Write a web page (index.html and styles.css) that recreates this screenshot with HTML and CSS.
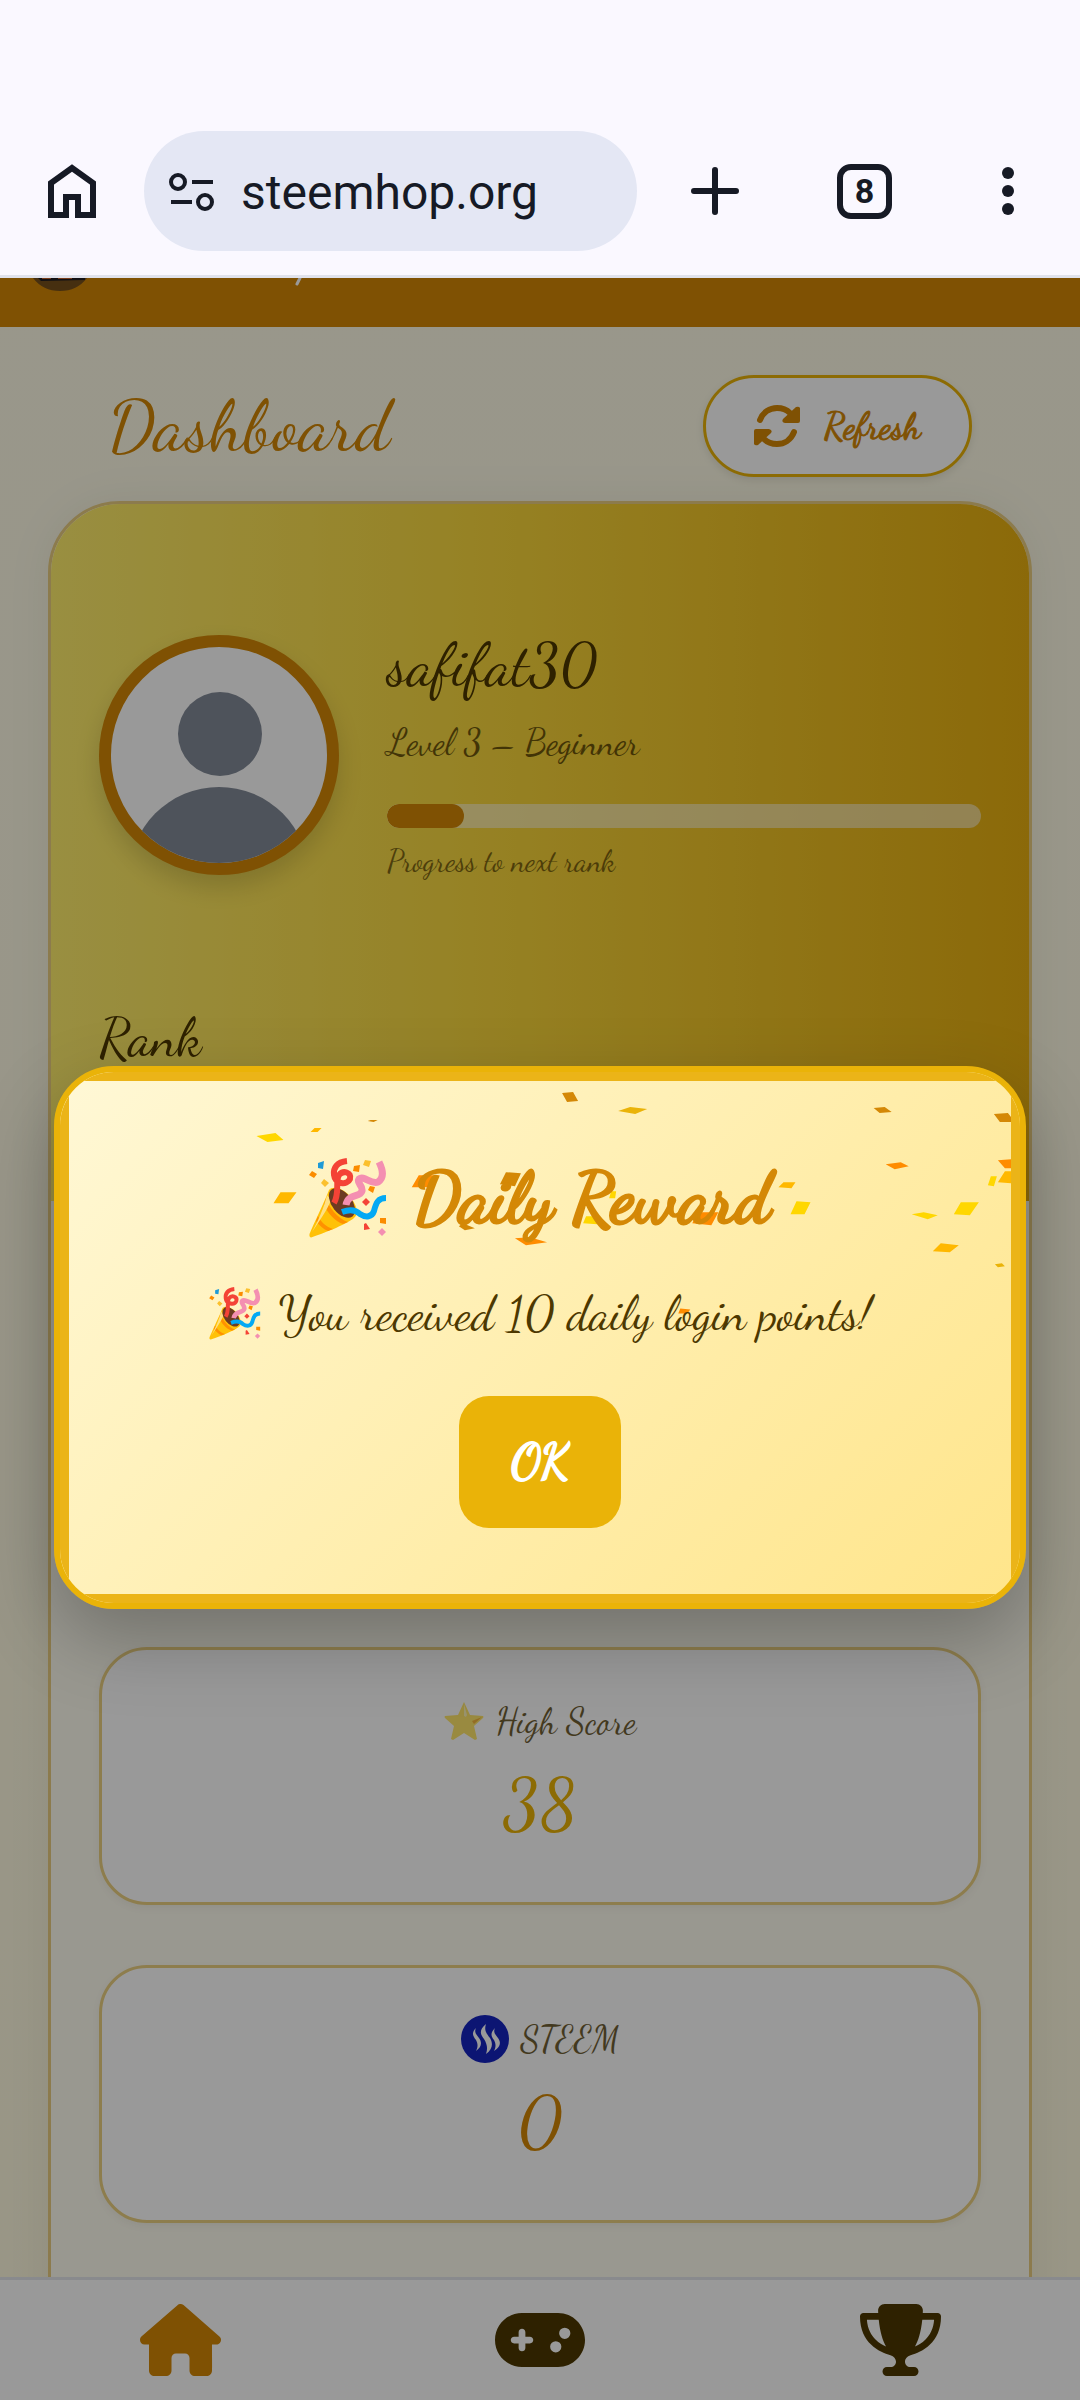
FILE: index.html
```html
<!DOCTYPE html>
<html lang="en">
<head>
  <meta charset="UTF-8">
  <meta name="viewport" content="width=device-width, initial-scale=1.0">
  <title>Dashboard</title>
  <link rel="stylesheet" href="styles.css">
</head>
<body>
  <!-- Shared icons -->
  <svg class="sprite" aria-hidden="true">
    <symbol id="popper" viewBox="0 0 78 80">
      <path d="M20 32C15 45 5 65 .5 76c-.5 3 1 4 3 3C18 74 38 66 45 60c6-5 2-14-5-23-8-8-17-9-20-5z" fill="#ffc107"/>
      <path d="M17 41c3 8 12 20 22 23l-5 2C26 63 18 55 15 46zM9 58c3 6 8 11 15 13l-5 2c-5-2-9-6-12-10z" fill="#ff9100"/>
      <path d="M18 37C15 50 9 63 3 74c6-9 16-23 19-32z" fill="#ffe082"/>
      <ellipse cx="33" cy="45" rx="10" ry="17" transform="rotate(-38 33 45)" fill="#6d3b22"/>
      <g fill="none">
        <path d="M38 3C28 4 24 10 25 17c1 9 13 11 16 4 2-7-7-9-11-4-4 6 1 18-5 28" stroke="#f44336" stroke-width="6"/>
        <path d="M37 47c2-12 14-7 16-14 1-6-6-8-3-12 5-4 12 6 19 3 6-4 5-12 1-20" stroke="#f48fb1" stroke-width="7"/>
        <path d="M33 54c8-3 14-2 18 2 6 4 12 3 14-3 2-8 4-13 12-13" stroke="#03a9f4" stroke-width="6"/>
      </g>
      <path d="M9 5l6-2-1 8-5-1z" fill="#1e9ad6"/>
      <path d="M0 17l3-4 5 3-3 4zM45 8l6-1-1 7-6-1zM61 28l5 1-2 6-5-3zM71 60h6v6l-6-1z" fill="#fb8c00"/>
      <path d="M12 25l3-4 5 4-4 4zM56 2l6 1-2 6-6-2z" fill="#fbc02d"/>
      <path d="M57 40l4 4-4 4-4-4zM57 65l4 6-6 1v-6z" fill="#f44336"/>
      <path d="M73 70l4 4-4 4-4-4z" fill="#f48fb1"/>
    </symbol>
  </svg>

  <header class="browser-bar">
    <button type="button" class="icon-btn" aria-label="Home">
      <svg width="48" height="54" viewBox="0 0 48 54"><path d="M3 51V19L24 4l21 15v32H30V33H18v18z" fill="none" stroke="#161a25" stroke-width="6"/></svg>
    </button>
    <div class="address">
      <svg width="46" height="38" viewBox="0 0 46 38" fill="none" stroke="#161a25" stroke-width="4"><circle cx="9" cy="9" r="7"/><path d="M23 9h21M2 29h21"/><circle cx="36" cy="29" r="7"/></svg>
      <input type="text" class="url" value="steemhop.org" aria-label="Address">
    </div>
    <div class="browser-actions">
      <button type="button" class="icon-btn" aria-label="New tab">
        <svg width="48" height="48" viewBox="0 0 48 48"><path d="M24 3v42M3 24h42" stroke="#161a25" stroke-width="6" stroke-linecap="round"/></svg>
      </button>
      <button type="button" class="icon-btn tabs">8</button>
      <button type="button" class="icon-btn" aria-label="Menu">
        <svg width="36" height="48" viewBox="0 0 36 48" fill="#161a25"><circle cx="18" cy="6" r="6"/><circle cx="18" cy="24" r="6"/><circle cx="18" cy="42" r="6"/></svg>
      </button>
    </div>
  </header>

  <div class="page">
    <div class="topbar">
      <svg width="320" height="16" viewBox="0 0 320 16">
        <path d="M33 0h54q-10 13-27 13T33 0z" fill="#764f1c"/>
        <path d="M38 0h47v2l-44 1z" fill="#1d1b22"/>
        <path d="M42 0h9v1h-9zM58 0h14v1H58z" fill="#c8632a"/>
        <path d="M300 0l-3 6" stroke="#fff" stroke-width="3" stroke-linecap="round"/>
      </svg>
    </div>

    <main class="content">
      <div class="dash-header">
        <h1>Dashboard</h1>
        <button type="button" class="refresh">
          <svg width="46" height="42" viewBox="0 0 46 42">
            <g id="arrow">
              <path d="M6 15C9 7 16 3 23 3c6 0 10 2 13 5l4 5" fill="none" stroke="#d48806" stroke-width="6" stroke-linecap="round"/>
              <path d="M46 3v13q0 2-2 2H31q-4-1-2-4L42 2q3-1 4 1z" fill="#d48806"/>
            </g>
            <use href="#arrow" transform="rotate(180 23 21)"/>
          </svg>
          Refresh
        </button>
      </div>

      <section class="card">
        <div class="profile">
          <div class="profile-row">
            <svg class="avatar" viewBox="0 0 216 216">
              <circle cx="109" cy="87" r="42" fill="#838b98"/>
              <circle cx="108" cy="230" r="90" fill="#838b98"/>
            </svg>
            <div class="profile-info">
              <h2>safifat30</h2>
              <p class="level">Level 3 – Beginner</p>
              <div class="progress"><div class="progress-fill" style="width: 13%"></div></div>
              <p class="hint">Progress to next rank</p>
            </div>
          </div>
          <h3>Rank</h3>
        </div>

        <div class="stats">
          <div class="stat">
            <p class="stat-label">
              <svg width="40" height="40" viewBox="0 0 40 40">
                <path d="M20 1l6 13 13 1q1 1 0 2l-9 8 3 13-2 1-11-7-11 7-2-1 3-13-9-8q-1-1 0-2l13-1z" fill="#ffe66b"/>
                <path d="M28 20l10-4-8 7z" fill="#f5b53d"/>
                <path d="M20 3l3 11-1 2-2-1z" fill="#fff6b8"/>
              </svg>
              <span>High Score</span>
            </p>
            <p class="stat-value gold">38</p>
          </div>
          <div class="stat">
            <p class="stat-label steem">
              <svg width="48" height="48" viewBox="0 0 48 48">
                <circle cx="24" cy="24" r="24" fill="#1523c0"/>
                <path d="M15 13c-5 5-3 8 0 12 2 4 2 7 0 11 6-4 6-9 3-13-3-4-5-6-3-10zM25 9c-7 6-6 10-2 15 3 5 4 9 2 15 7-5 7-11 4-16-4-5-6-8-4-14zM34 13c-5 5-4 8-1 12 2 4 2 7 0 11 7-4 7-9 4-13-3-4-5-6-3-10z" fill="#fff"/>
              </svg>
              <span>STEEM</span>
            </p>
            <p class="stat-value amber">0</p>
          </div>
        </div>
      </section>
    </main>

    <nav class="bottom-nav">
      <a href="#" class="active" aria-label="Home">
        <svg width="81" height="72" viewBox="0 0 576 512"><path d="M575.8 255.5c0 18-15 32.1-32 32.1h-32l.7 160.2c0 2.7-.2 5.4-.5 8.1V472c0 22.1-17.9 40-40 40H392c-22.1 0-40-17.9-40-40V384c0-17.7-14.3-32-32-32H256c-17.7 0-32 14.3-32 32v88c0 22.1-17.9 40-40 40H104c-22.1 0-40-17.9-40-40V287.6H32c-18 0-32-14-32-32.1c0-9 3-17 10-24L266.4 8c7-7 15-8 22-8s15 2 21 7L564.8 231.5c8 7 12 15 11 24z"/></svg>
      </a>
      <a href="#" aria-label="Play">
        <svg width="90" height="72" viewBox="0 0 640 512"><path fill-rule="evenodd" d="M192 64C86 64 0 150 0 256s86 192 192 192h256c106 0 192-86 192-192S554 64 448 64H192zM496 168a40 40 0 1 1 0 80 40 40 0 1 1 0-80zM392 304a40 40 0 1 1 80 0 40 40 0 1 1-80 0zM168 200c0-13.3 10.7-24 24-24s24 10.7 24 24v32h32c13.3 0 24 10.7 24 24s-10.7 24-24 24h-32v32c0 13.3-10.7 24-24 24s-24-10.7-24-24v-32h-32c-13.3 0-24-10.7-24-24s10.7-24 24-24h32z"/></svg>
      </a>
      <a href="#" aria-label="Leaderboard">
        <svg width="81" height="72" viewBox="0 0 576 512"><path fill-rule="evenodd" d="M400 0H176c-26.5 0-48.1 21.8-47.1 48.2.2 5.3.4 10.6.7 15.8H24C10.7 64 0 74.7 0 88c0 92.6 33.5 157 78.5 200.7 44.3 43.1 98.3 64.8 138.1 75.8 23.4 6.5 39.4 26 39.4 45.6 0 20.9-17 37.9-37.9 37.9H192c-17.7 0-32 14.3-32 32s14.3 32 32 32h192c17.7 0 32-14.3 32-32s-14.3-32-32-32h-26.1c-20.9 0-37.9-17-37.9-37.9 0-19.6 15.9-39.2 39.4-45.6 39.9-11 93.9-32.7 138.2-75.8C542.5 245 576 180.6 576 88c0-13.3-10.7-24-24-24H446.4c.3-5.2.5-10.4.7-15.8C448.1 21.8 426.5 0 400 0zM48.9 112h84.4c9.1 90.1 29.2 150.3 51.9 190.6-24.9-11-50.8-26.5-73.2-48.3-32-31.1-58-76-63.1-142.3zM464.1 254.3c-22.4 21.8-48.3 37.3-73.2 48.3 22.7-40.3 42.8-100.5 51.9-190.6h84.4c-5.1 66.3-31.1 111.2-63.1 142.3z"/></svg>
      </a>
    </nav>

    <div class="overlay">
      <div class="modal" role="dialog" aria-labelledby="rewardTitle">
        <svg class="confetti" viewBox="0 0 942 512" preserveAspectRatio="xMidYMin slice" aria-hidden="true">
          <path fill="#ffd700" d="M188 55l19-3 8 7-16 2zM918 104l3-9h6l-3 10zM842 133l12-2 14 3-10 4zM884 133l7-12h18l-9 13zM721 133l6-13 14 1-6 12zM540 117l2-7h5l-1 7zM514 142l3-7h13l-2 8z"/>
          <path fill="#ffb800" d="M242 51l4-4h7l-4 4zM205 122l7-11h16l-8 11zM928 101l7-11h7v12zM863 170l8-8 18 2-9 7zM709 106l5-5h12l-4 6z"/>
          <path fill="#ff8c00" d="M343 106l7-12h21l-7 12zM446 157l15-1 17 5-21 3zM816 83l15-2 8 4-14 3zM928 79l14-1v9h-7zM623 142l5-11h21l-7 13zM609 232l2-5 10 1-3 4z"/>
          <path fill="#d48806" d="M299 40l3-1h7l-4 2zM431 103l6-12 15 1-6 13zM390 145l4-3 12 5-10 2zM493 12l11-1 5 9-11 1zM804 27l11-1 7 5-12 1zM924 33l14-1 4 5v4h-12z"/>
          <path fill="#eab308" d="M549 30l12-4 17 2-12 5zM925 183l7-1 3 3-7 1z"/>
        </svg>
        <h2 id="rewardTitle"><svg width="78" height="80"><use href="#popper"/></svg><span>Daily Reward</span></h2>
        <p><svg width="52" height="53"><use href="#popper"/></svg><span>You received 10 daily login points!</span></p>
        <button type="button" class="ok">OK</button>
      </div>
    </div>
  </div>
</body>
</html>
```
FILE: styles.css
```css
* {
  margin: 0;
  padding: 0;
  box-sizing: border-box;
}

body {
  display: flex;
  flex-direction: column;
  height: 100vh;
  color: #4d3800;
  font-family: 'Dancing Script', 'Liberation Serif', serif;
}

button,
input {
  font: inherit;
  border: none;
  background: none;
}

button {
  cursor: pointer;
}

svg {
  display: block;
  flex-shrink: 0;
}

.sprite {
  position: absolute;
  width: 0;
  height: 0;
}

/* Browser bar */
.browser-bar {
  display: flex;
  align-items: center;
  flex-shrink: 0;
  padding: 131px 54px 24px 48px;
  background: #faf8ff;
  border-bottom: 3px solid #e0e2ec;
  color: #161a25;
  font-family: Roboto, sans-serif;
}

.address {
  display: flex;
  flex: 1;
  align-items: center;
  gap: 26px;
  min-width: 0;
  height: 120px;
  margin: 0 54px 0 48px;
  padding: 2px 25px 0;
  border-radius: 60px;
  background: #e4e7f4;
}

.url {
  flex: 1;
  min-width: 0;
  color: #161a25;
  font-size: 48px;
  outline: none;
}

.browser-actions {
  display: flex;
  align-items: center;
  gap: 98px;
}

.tabs {
  width: 55px;
  height: 55px;
  border: 6px solid #161a25;
  border-radius: 14px;
  color: #161a25;
  font-size: 34px;
  font-weight: 700;
  line-height: 43px;
}

/* Page */
.page {
  position: relative;
  display: flex;
  flex: 1;
  flex-direction: column;
  min-height: 0;
  overflow: hidden;
  background: linear-gradient(to bottom, #fffce8, #fffadf);
}

.topbar {
  flex-shrink: 0;
  height: 49px;
  background: #d48806;
}

.content {
  flex: 1;
  min-height: 0;
  padding: 48px 48px 0;
  overflow: hidden;
}

.dash-header {
  display: flex;
  align-items: center;
  justify-content: space-between;
  height: 102px;
  margin-bottom: 24px;
  padding: 0 60px;
}

.dash-header h1 {
  color: #d48806;
  font-size: 72px;
  font-weight: 400;
}

.refresh {
  display: flex;
  align-items: center;
  gap: 24px;
  height: 102px;
  padding: 0 48px;
  border: 3px solid #eab308;
  border-radius: 51px;
  background: #fff;
  box-shadow: 0 3px 9px rgba(0, 0, 0, 0.1);
  color: #d48806;
  font-size: 36px;
  -webkit-text-stroke: 1px currentColor;
}

.card {
  overflow: hidden;
  border: 3px solid #e9cd80;
  border-radius: 72px;
  background: #fffdf0;
  box-shadow: 0 0 48px rgba(0, 0, 0, 0.06);
}

.profile {
  height: 697px;
  padding: 131px 48px 0;
  background: linear-gradient(to right, #ffee6d, #fad83c 45%, #e8b010);
}

.profile-row {
  display: flex;
  align-items: flex-start;
  gap: 48px;
  margin-bottom: 126px;
}

.avatar {
  width: 240px;
  height: 240px;
  border: 12px solid #d48806;
  border-radius: 50%;
  background: #fff;
  box-shadow: 0 12px 24px rgba(0, 0, 0, 0.15);
}

.profile-info {
  flex: 1;
}

.profile-info h2 {
  margin-bottom: 18px;
  font-size: 60px;
  font-weight: 400;
  line-height: 60px;
}

.level {
  margin-bottom: 31px;
  font-size: 36px;
  line-height: 60px;
  opacity: 0.8;
}

.progress {
  height: 24px;
  margin-bottom: 12px;
  overflow: hidden;
  border-radius: 12px;
  background: rgba(255, 255, 255, 0.5);
}

.progress-fill {
  height: 100%;
  border-radius: 12px;
  background: #d48806;
}

.hint {
  font-size: 30px;
  line-height: 42px;
  opacity: 0.7;
}

.profile h3 {
  font-size: 54px;
  font-weight: 400;
  line-height: 60px;
}

.stats {
  display: flex;
  flex-direction: column;
  gap: 60px;
  padding: 446px 48px 180px;
}

.stat {
  height: 258px;
  padding: 44px 48px;
  border: 3px solid #ecd080;
  border-radius: 48px;
  background: #fff;
  box-shadow: 0 3px 9px rgba(0, 0, 0, 0.05);
  text-align: center;
}

.stat-label {
  display: flex;
  align-items: center;
  justify-content: center;
  gap: 12px;
  height: 54px;
  font-size: 36px;
}

.stat-label span {
  opacity: 0.8;
}

.stat-value {
  font-size: 72px;
  line-height: 112px;
}

.gold {
  color: #eab308;
}

.amber {
  color: #d48806;
}

/* Bottom nav */
.bottom-nav {
  display: flex;
  flex-shrink: 0;
  height: 123px;
  padding-top: 24px;
  border-top: 3px solid #e5e7eb;
  background: #fff;
}

.bottom-nav a {
  display: flex;
  flex: 1;
  justify-content: center;
  color: #4d3800;
}

.bottom-nav a.active {
  color: #d48806;
}

.bottom-nav svg {
  fill: currentColor;
}

/* Daily reward modal */
.overlay {
  position: absolute;
  inset: 0;
  display: flex;
  align-items: center;
  justify-content: center;
  padding-bottom: 4px;
  background: rgba(0, 0, 0, 0.4);
}

.modal {
  position: relative;
  display: flex;
  flex-direction: column;
  align-items: center;
  width: 90%;
  padding: 78px 48px 75px;
  overflow: hidden;
  border: 6px solid #eab308;
  border-radius: 60px;
  background: linear-gradient(135deg, #fff8d6, #ffe58a);
  box-shadow: 0 30px 75px rgba(0, 0, 0, 0.25);
}

.modal::before {
  content: '';
  position: absolute;
  inset: 0;
  border: 9px solid #ebb418;
}

.confetti {
  position: absolute;
  top: 9px;
  left: 9px;
  width: calc(100% - 18px);
  height: calc(100% - 18px);
}

.modal h2,
.modal p {
  position: relative;
  display: flex;
  align-items: center;
}

.modal h2 {
  gap: 26px;
  margin-bottom: 36px;
  color: #d48806;
  font-size: 72px;
  font-weight: 400;
  line-height: 96px;
  -webkit-text-stroke: 3px currentColor;
}

.modal p {
  gap: 18px;
  margin-bottom: 51px;
  font-size: 48px;
  line-height: 63px;
}

.ok {
  position: relative;
  height: 132px;
  padding: 0 52px;
  border-radius: 30px;
  background: #eab308;
  color: #fff;
  font-size: 48px;
  -webkit-text-stroke: 2px currentColor;
}
```
